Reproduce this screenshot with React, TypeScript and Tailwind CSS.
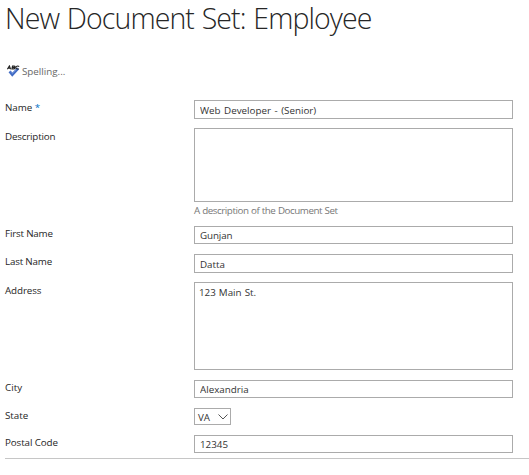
import type { ReactNode } from "react";

function Row({ label, required, className, labelClass, children }: {
  label: string;
  required?: boolean;
  className: string;
  labelClass: string;
  children: ReactNode;
}) {
  return (
    <div className={`flex items-start ${className}`}>
      <label className={`w-[189px] shrink-0 whitespace-nowrap leading-[14px] text-[#262626] ${labelClass}`}>
        {label}
        {required && <span className="text-[#0072c6]"> *</span>}
      </label>
      {children}
    </div>
  );
}

const box = "block w-[319px] shrink-0 resize-none rounded-none border border-[#ababab] bg-white px-[5px] text-[#333] outline-none";

export default function App() {
  return (
    <main className="h-[475px] w-full bg-white pl-[5px] font-['Open_Sans','Noto_Sans',sans-serif] text-[9.8px]">
      <h1 className="h-[64px] whitespace-nowrap font-['Open_Sans',sans-serif] text-[28.5px] font-light leading-[36px] tracking-[-0.9px] text-[#262626] [word-spacing:1.2px]">
        New Document Set: Employee
      </h1>
      <div className="flex h-[36px] items-start text-[#666]">
        <svg className="ml-[2px] mt-px h-[12px] w-[13px] shrink-0" viewBox="0 0 13 12" fill="none">
          <path d="M2.6 6.3 5.3 9.6 11.2 3.4" stroke="#426cc4" strokeWidth="2.7" />
          <path d="M3.2 6.4 5.4 8.6 10.6 3.3" stroke="#789be3" strokeWidth=".7" />
          <path d="M.3 4.2 2.4.9 3.6 4.2M1.2 3.2h2.2M5.5 1 4.9 3.9h1.7c1.6 0 1.6-1.5 0-1.5H5.2h1.7C8.4 2.4 8.4 1 7 1zM12.2 1.5C10.4.5 9 1.4 8.9 2.5s1.2 1.9 2.8 1.2" stroke="#222" strokeWidth="1.1" />
        </svg>
        <span className="ml-[2px] leading-[15px]">Spelling...</span>
      </div>

      <form>
        <Row label="Name" required className="h-[28px]" labelClass="pt-px tracking-[-0.05px]">
          <input className={`${box} h-[19px] pt-[2px] [word-spacing:1px]`} defaultValue="Web Developer - (Senior)" />
        </Row>
        <Row label="Description" className="h-[98px]" labelClass="pt-[2px] tracking-[-0.18px]">
          <div>
            <textarea className={`${box} h-[74px]`} />
            <p className="pt-[2px] leading-[14px] tracking-[-0.45px] text-[#777] [word-spacing:0.4px]">A description of the Document Set</p>
          </div>
        </Row>
        <Row label="First Name" className="h-[28px]" labelClass="pt-px tracking-[-0.18px]">
          <input className={`${box} h-[18px] pt-px tracking-[-0.1px]`} defaultValue="Gunjan" />
        </Row>
        <Row label="Last Name" className="h-[28px]" labelClass="pt-px tracking-[-0.18px]">
          <input className={`${box} h-[19px] pt-[2px]`} defaultValue="Datta" />
        </Row>
        <Row label="Address" className="h-[98px]" labelClass="pt-[2px] tracking-[-0.1px]">
          <textarea className={`${box} h-[88px] pl-[4px] pt-[3px] leading-[14px] [word-spacing:0.5px]`} defaultValue="123 Main St." />
        </Row>
        <Row label="City" className="h-[28px]" labelClass="pt-px">
          <input className={`${box} h-[18px] pt-px`} defaultValue="Alexandria" />
        </Row>
        <Row label="State" className="h-[27px]" labelClass="pt-px">
          <button type="button" className="flex h-[17px] w-[37px] items-center border border-[#ababab] pl-[3px] text-[#333]">
            <span className="pt-[2px] leading-[14px]">VA</span>
            <svg className="ml-auto mr-[2px] h-[6px] w-[10px]" viewBox="0 0 10 6" fill="none">
              <path d="M.5.5 5 5 9.5.5" stroke="#555" />
            </svg>
          </button>
        </Row>
        <Row label="Postal Code" className="h-[23px]" labelClass="pt-px tracking-[-0.1px]">
          <input className={`${box} h-[18px] pt-px`} defaultValue="12345" />
        </Row>
      </form>
      <div className="h-px bg-[#c6c6c6]" />
    </main>
  );
}
